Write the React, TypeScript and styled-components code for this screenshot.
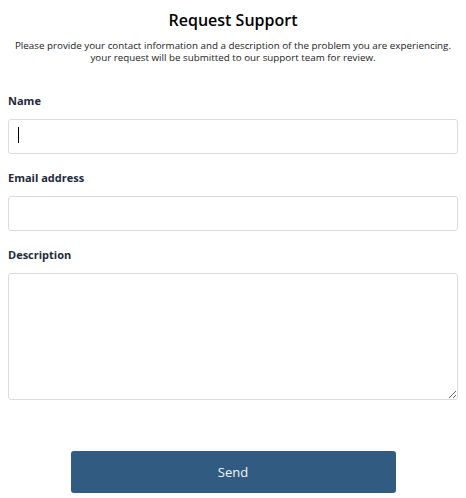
import React from "react";
import styled, { createGlobalStyle } from "styled-components";

const GlobalStyle = createGlobalStyle`
  html, body {
    margin: 0;
    padding: 0;
    background: #ffffff;
  }
  body {
    margin: 8px;
    font-family: "Open Sans", "Noto Sans", "Liberation Sans", sans-serif;
    color: #1f2937;
  }
`;

const Page = styled.div`
  display: flex;
  flex-direction: column;
  width: 450px;
`;

const Header = styled.header`
  display: flex;
  flex-direction: column;
  align-items: center;
  text-align: center;
`;

const Title = styled.h1`
  margin: 2px 0 0;
  font-size: 16px;
  line-height: 20px;
  font-weight: 600;
  color: #000000;
`;

const Subtitle = styled.p`
  margin: 10px 0 0;
  font-size: 9.8px;
  line-height: 12px;
  color: #1a1a1a;
`;

const Form = styled.form`
  display: flex;
  flex-direction: column;
  margin-top: 30px;
`;

const Field = styled.div`
  display: flex;
  flex-direction: column;
  margin-bottom: 17px;
`;

const Label = styled.label`
  font-size: 11px;
  line-height: 14px;
  font-weight: 700;
  color: #1e293b;
  margin-bottom: 11px;
`;

const InputWrap = styled.div`
  position: relative;
  display: flex;
`;

const Caret = styled.span`
  position: absolute;
  left: 10px;
  top: 8px;
  width: 1px;
  height: 16px;
  background: #000000;
  pointer-events: none;
`;

const controlBase = `
  box-sizing: border-box;
  width: 100%;
  border: 1px solid #dcdcdc;
  border-radius: 3px;
  background: #ffffff;
  font-family: inherit;
  font-size: 13px;
  color: #000000;
  caret-color: transparent;
  outline: none;
  margin: 0;
`;

const TextInput = styled.input`
  ${controlBase}
  height: 35px;
  padding: 0 9px;
`;

const TextArea = styled.textarea`
  ${controlBase}
  display: block;
  height: 127px;
  padding: 8px 9px;
  resize: both;
`;

const Actions = styled.div`
  display: flex;
  justify-content: center;
  margin-top: 34px;
`;

const SendButton = styled.button`
  width: 325px;
  height: 42px;
  border: none;
  border-radius: 3px;
  background: #325b82;
  color: #f3f6fa;
  font-family: inherit;
  font-size: 13px;
  cursor: pointer;
`;

export default function App() {
  return (
    <>
      <GlobalStyle />
      <Page>
        <Header>
          <Title>Request Support</Title>
          <Subtitle>
            Please provide your contact information and a description of the problem you are experiencing.
            <br />
            your request will be submitted to our support team for review.
          </Subtitle>
        </Header>
        <Form onSubmit={(e) => e.preventDefault()}>
          <Field>
            <Label htmlFor="name">Name</Label>
            <InputWrap>
              <TextInput id="name" type="text" />
              <Caret />
            </InputWrap>
          </Field>
          <Field>
            <Label htmlFor="email">Email address</Label>
            <TextInput id="email" type="email" />
          </Field>
          <Field>
            <Label htmlFor="description">Description</Label>
            <TextArea id="description" />
          </Field>
          <Actions>
            <SendButton type="submit">Send</SendButton>
          </Actions>
        </Form>
      </Page>
    </>
  );
}
